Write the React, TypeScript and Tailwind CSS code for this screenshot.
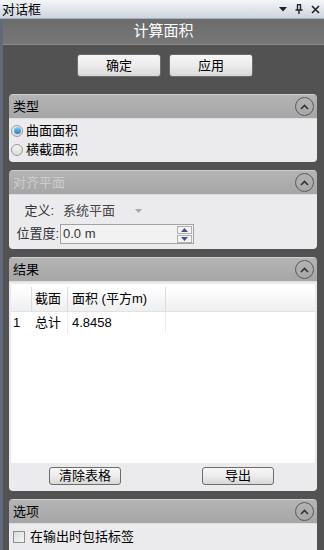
import React from 'react';

const font = "font-['Liberation_Sans','Noto_Sans_CJK_SC',sans-serif]";

const CollapseButton: React.FC = () => (
  <div className="w-[19px] h-[19px] rounded-full border border-[#5a5a5a] flex items-center justify-center">
    <svg width="9" height="6" viewBox="0 0 9 6">
      <path d="M1 5 L4.5 1.5 L8 5" fill="none" stroke="#333" strokeWidth="1.6" />
    </svg>
  </div>
);

const Panel: React.FC<{ title: string; disabled?: boolean; className?: string; children: React.ReactNode }> = ({
  title,
  disabled,
  className,
  children,
}) => (
  <div className={`flex flex-col rounded-[4px] overflow-hidden ${className ?? ''}`}>
    <div className="h-[25px] shrink-0 flex items-center justify-between pl-[4px] pr-[3px] bg-gradient-to-b from-[#b4b4b4] to-[#a6a6a6] border-t border-[#cfcfcf] border-b border-b-[#dedede]">
      <span className={`text-[13px] ${disabled ? 'text-[#cdcdcd]' : 'text-black'}`}>{title}</span>
      <CollapseButton />
    </div>
    <div className="bg-[#ebebee] flex-1 flex flex-col">{children}</div>
  </div>
);

const Btn: React.FC<{ label: string; className?: string }> = ({ label, className }) => (
  <div
    className={`flex items-center justify-center rounded-[3px] border border-[#6c6c6c] bg-gradient-to-b from-[#f6f6f6] via-[#ececec] to-[#d8d8d8] text-[13px] text-black ${className ?? ''}`}
  >
    {label}
  </div>
);

const Radio: React.FC<{ checked?: boolean; label: string }> = ({ checked, label }) => (
  <div className="flex items-center h-[19px] pl-[2px]">
    <div className="w-[12px] h-[12px] rounded-full border border-[#9a9a9a] bg-gradient-to-b from-[#f4f4f4] to-[#dcdcdc] flex items-center justify-center">
      {checked && <div className="w-[7px] h-[7px] rounded-full bg-gradient-to-b from-[#7fd0f5] to-[#1a7fc0]" />}
    </div>
    <span className="ml-[3px] text-[13px] text-black">{label}</span>
  </div>
);

const App: React.FC = () => {
  return (
    <div className={`w-[324px] h-[550px] overflow-hidden bg-[#525252] flex flex-col ${font}`}>
      {/* title bar */}
      <div className="h-[19px] shrink-0 flex items-center justify-between pl-[2px] pr-[4px] bg-gradient-to-b from-[#f3f5f8] to-[#cfd5df] border-b border-[#a7afbb]">
        <span className="text-[13px] text-black leading-none">对话框</span>
        <div className="flex items-center gap-[8px]">
          <svg width="8" height="6" viewBox="0 0 8 6">
            <path d="M0 1 L8 1 L4 5.5 Z" fill="#222" />
          </svg>
          <svg width="8" height="10" viewBox="0 0 8 10">
            <path d="M2 0.5 H6 M2.5 0.5 V6 M5.5 0.5 V6 M0.5 6 H7.5 M4 6 V10" fill="none" stroke="#222" strokeWidth="1.4" />
          </svg>
          <svg width="9" height="9" viewBox="0 0 9 9">
            <path d="M1 1 L8 8 M8 1 L1 8" fill="none" stroke="#222" strokeWidth="1.6" />
          </svg>
        </div>
      </div>

      <div className="flex-1 flex flex-col border-l-[3px] border-[#5f6b7d]">
        {/* heading */}
        <div className="h-[26px] shrink-0 flex items-center justify-center bg-gradient-to-b from-[#6c6c6c] to-[#777777] border-b border-[#8a8a8a]">
          <span className="text-[15px] text-white">计算面积</span>
        </div>

        <div className="flex justify-center gap-[8px] pt-[9px] pl-[3px]">
          <Btn label="确定" className="w-[84px] h-[23px]" />
          <Btn label="应用" className="w-[84px] h-[23px]" />
        </div>

        <div className="flex-1 flex flex-col gap-[8px] pt-[17px] pl-[6px] pr-[7px]">
          <Panel title="类型" className="h-[68px]">
            <div className="pt-[2px]">
              <Radio checked label="曲面面积" />
              <Radio label="横截面积" />
            </div>
          </Panel>

          <Panel title="对齐平面" disabled className="h-[79px]">
            <div className="flex items-center h-[26px] mt-[3px]">
              <span className="w-[45px] text-right text-[13px] text-[#333]">定义:</span>
              <span className="ml-[9px] text-[13px] text-[#444]">系统平面</span>
              <svg className="ml-[20px]" width="7" height="4" viewBox="0 0 7 4">
                <path d="M0 0 H7 L3.5 4 Z" fill="#a8a8a8" />
              </svg>
            </div>
            <div className="flex items-center h-[20px]">
              <span className="w-[50px] text-right text-[13px] text-[#333]">位置度:</span>
              <div className="ml-[1px] w-[134px] h-[20px] border border-[#a3a3a3] bg-[#f2f2f2] flex items-center justify-between pl-[2px] pr-[1px]">
                <span className="text-[13px] text-[#333]">0.0 m</span>
                <div className="flex flex-col gap-[1px]">
                  <div className="w-[15px] h-[8px] border border-[#b0b0b0] bg-[#f4f4f4] flex items-center justify-center">
                    <svg width="7" height="4" viewBox="0 0 7 4">
                      <path d="M0 4 H7 L3.5 0 Z" fill="#3b4f93" />
                    </svg>
                  </div>
                  <div className="w-[15px] h-[8px] border border-[#b0b0b0] bg-[#f4f4f4] flex items-center justify-center">
                    <svg width="7" height="4" viewBox="0 0 7 4">
                      <path d="M0 0 H7 L3.5 4 Z" fill="#3b4f93" />
                    </svg>
                  </div>
                </div>
              </div>
            </div>
          </Panel>

          <Panel title="结果" className="h-[234px]">
            <div className="mx-[2px] mt-[2px] h-[179px] bg-white flex flex-col">
              <div className="mt-[3px] h-[25px] flex bg-gradient-to-b from-white to-[#eeeff1] border-b border-[#e2e2e2] text-[13px] text-black">
                <div className="w-[21px] border-r border-[#dcdcdc]" />
                <div className="w-[36px] border-r border-[#dcdcdc] flex items-center pl-[3px]">截面</div>
                <div className="w-[98px] border-r border-[#dcdcdc] flex items-center pl-[4px]">面积 (平方m)</div>
                <div className="flex-1" />
              </div>
              <div className="h-[21px] flex text-[13px] text-black">
                <div className="w-[21px] flex items-center pl-[2px]">1</div>
                <div className="w-[36px] border-r border-[#ececec] flex items-center pl-[3px]">总计</div>
                <div className="w-[98px] border-r border-[#ececec] flex items-center pl-[4px]">4.8458</div>
              </div>
            </div>
            <div className="flex mt-[4px]">
              <Btn label="清除表格" className="ml-[40px] w-[72px] h-[18px]" />
              <Btn label="导出" className="ml-[81px] w-[72px] h-[18px]" />
            </div>
          </Panel>

          <Panel title="选项" className="flex-1 rounded-b-none">
            <div className="flex items-center h-[26px] pl-[4px]">
              <div className="w-[12px] h-[12px] border border-[#8e8e8e] bg-gradient-to-br from-[#dcdcdc] to-[#f6f6f6]" />
              <span className="ml-[5px] text-[13px] text-black">在输出时包括标签</span>
            </div>
          </Panel>
        </div>
      </div>
    </div>
  );
};

export default App;
